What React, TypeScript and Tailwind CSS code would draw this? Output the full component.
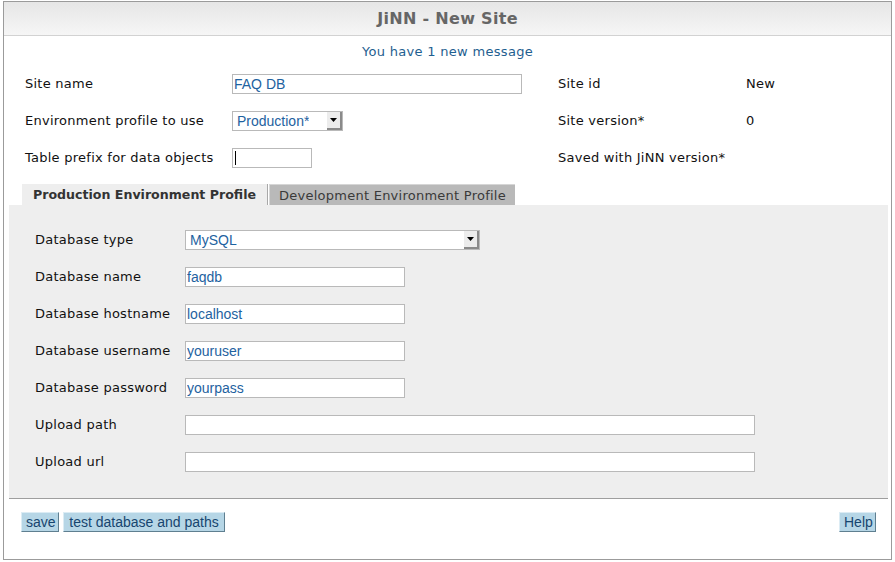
import React from 'react';

const label = "font-['DejaVu_Sans',Verdana,sans-serif] text-[13px] tracking-[0.25px] text-[#111]";
const field =
  "h-[20px] border border-[#b9b9b9] bg-white px-[1px] font-['Liberation_Sans',Arial,sans-serif] text-[14px] leading-[18px] text-[#1e62a0] outline-none";
const btn =
  "h-[20px] px-[4px] bg-[#b6d6e6] border border-t-[#dcecf4] border-l-[#dcecf4] border-b-[#5f7f90] border-r-[#5f7f90] font-['Liberation_Sans',Arial,sans-serif] text-[14px] leading-[18px] text-[#17456f]";

function Select({ value, width }: { value: string; width: string }) {
  return (
    <div className={`${field} ${width} flex items-center justify-between pr-0 text-[13px]`}>
      <span className="pl-[3px] truncate">{value}</span>
      <span className="h-[18px] w-[15px] flex items-center justify-center bg-[#ececec] border-r-2 border-b-2 border-[#8a8a8a]">
        <svg width="7" height="4" viewBox="0 0 7 4">
          <polygon points="0,0 7,0 3.5,4" fill="#000" />
        </svg>
      </span>
    </div>
  );
}

function PanelRow({ name, children }: { name: string; children: React.ReactNode }) {
  return (
    <div className="flex items-center h-[20px]">
      <div className={`${label} w-[150px]`}>{name}</div>
      {children}
    </div>
  );
}

export default function App() {
  return (
    <div className="w-[895px] h-[562px] bg-white pt-[1px] pl-[3px]">
      <div className="w-[889px] h-[559px] border border-[#9b9b9b] flex flex-col">
        {/* header */}
        <div className="h-[34px] shrink-0 bg-gradient-to-b from-[#e6e6e6] to-[#f6f6f6] border-b border-[#d2d2d2] flex items-center justify-center">
          <span className="font-['DejaVu_Sans',Verdana,sans-serif] font-bold text-[16px] tracking-[0.3px] text-[#666]">JiNN - New Site</span>
        </div>

        <div className="mt-[7px] text-center font-['DejaVu_Sans',Verdana,sans-serif] text-[13px] tracking-[0.3px] leading-[18px] text-[#1f6090]">
          You have 1 new message
        </div>

        {/* top fields */}
        <div className="mt-[13px] pl-[21px] flex flex-col gap-[17px]">
          <div className="flex items-center h-[20px]">
            <div className="w-[533px] flex items-center">
              <div className={`${label} w-[207px]`}>Site name</div>
              <input className={`${field} w-[290px]`} defaultValue="FAQ DB" />
            </div>
            <div className={`${label} w-[188px]`}>Site id</div>
            <div className={label}>New</div>
          </div>
          <div className="flex items-center h-[20px]">
            <div className="w-[533px] flex items-center">
              <div className={`${label} w-[207px]`}>Environment profile to use</div>
              <Select value="Production*" width="w-[111px]" />
            </div>
            <div className={`${label} w-[188px]`}>Site version*</div>
            <div className={label}>0</div>
          </div>
          <div className="flex items-center h-[20px]">
            <div className="w-[533px] flex items-center">
              <div className={`${label} w-[207px]`}>Table prefix for data objects</div>
              <div className={`${field} w-[80px] flex items-center`}>
                <span className="w-[1px] h-[14px] bg-black ml-[1px]" />
              </div>
            </div>
            <div className={label}>Saved with JiNN version*</div>
          </div>
        </div>

        {/* tabs */}
        <div className="mt-[16px] ml-[18px] flex h-[21px] shrink-0">
          <div className="w-[246px] pt-[2px] bg-[#eeeeee] border-r border-[#a8a8a8] flex items-center justify-center font-['DejaVu_Sans',Verdana,sans-serif] font-bold text-[12.6px] text-[#333]">
            Production Environment Profile
          </div>
          <div className="ml-[1px] w-[246px] pt-[2px] bg-[#b9b9b9] border-l border-t border-[#d6d6d6] flex items-center justify-center font-['DejaVu_Sans',Verdana,sans-serif] text-[13px] tracking-[0.25px] text-[#3a3a3a]">
            Development Environment Profile
          </div>
        </div>

        {/* panel */}
        <div className="ml-[5px] mr-[3px] bg-[#eeeeee] border-b border-[#9e9e9e] pt-[25px] pb-[26px] pl-[26px] flex flex-col gap-[17px]">
          <PanelRow name="Database type">
            <Select value="MySQL" width="w-[295px]" />
          </PanelRow>
          <PanelRow name="Database name">
            <input className={`${field} w-[220px]`} defaultValue="faqdb" />
          </PanelRow>
          <PanelRow name="Database hostname">
            <input className={`${field} w-[220px]`} defaultValue="localhost" />
          </PanelRow>
          <PanelRow name="Database username">
            <input className={`${field} w-[220px]`} defaultValue="youruser" />
          </PanelRow>
          <PanelRow name="Database password">
            <input className={`${field} w-[220px]`} defaultValue="yourpass" />
          </PanelRow>
          <PanelRow name="Upload path">
            <input className={`${field} w-[570px]`} defaultValue="" />
          </PanelRow>
          <PanelRow name="Upload url">
            <input className={`${field} w-[570px]`} defaultValue="" />
          </PanelRow>
        </div>

        {/* buttons */}
        <div className="mt-[13px] pl-[17px] pr-[15px] flex items-center">
          <button className={`${btn} w-[38px]`}>save</button>
          <button className={`${btn} ml-[4px] w-[162px]`}>test database and paths</button>
          <button className={`${btn} ml-auto w-[37px]`}>Help</button>
        </div>
      </div>
    </div>
  );
}
